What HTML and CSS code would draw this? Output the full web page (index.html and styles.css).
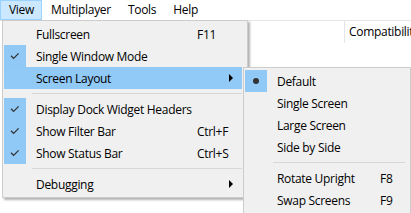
FILE: index.html
```html
<!DOCTYPE html>
<html>
<head>
<meta charset="utf-8">
<link rel="stylesheet" href="styles.css">
</head>
<body>
<div class="menubar">
  <div class="mb-item active">View</div>
  <div class="mb-item">Multiplayer</div>
  <div class="mb-item">Tools</div>
  <div class="mb-item">Help</div>
</div>
<div class="table-header">
  <div class="th-spacer"></div>
  <div class="th-cell">Compatibility</div>
</div>

<div class="menu main-menu">
  <div class="item"><span class="chk"></span><span class="label">Fullscreen</span><span class="sc">F11</span><span></span></div>
  <div class="item checked"><span class="chk"><svg width="22" height="22" viewBox="0 0 22 22"><path d="M7 10.8 L9.6 13.4 L14.6 8.4" fill="none" stroke="#333" stroke-width="1.3"/></svg></span><span class="label">Single Window Mode</span><span class="sc"></span><span></span></div>
  <div class="item hl"><span class="chk"></span><span class="label">Screen Layout</span><span class="sc"></span><span class="arr"></span></div>
  <div class="sep"></div>
  <div class="item checked"><span class="chk"><svg width="22" height="22" viewBox="0 0 22 22"><path d="M7 10.8 L9.6 13.4 L14.6 8.4" fill="none" stroke="#333" stroke-width="1.3"/></svg></span><span class="label">Display Dock Widget Headers</span><span class="sc"></span><span></span></div>
  <div class="item checked"><span class="chk"><svg width="22" height="22" viewBox="0 0 22 22"><path d="M7 10.8 L9.6 13.4 L14.6 8.4" fill="none" stroke="#333" stroke-width="1.3"/></svg></span><span class="label">Show Filter Bar</span><span class="sc">Ctrl+F</span><span></span></div>
  <div class="item checked"><span class="chk"><svg width="22" height="22" viewBox="0 0 22 22"><path d="M7 10.8 L9.6 13.4 L14.6 8.4" fill="none" stroke="#333" stroke-width="1.3"/></svg></span><span class="label">Show Status Bar</span><span class="sc">Ctrl+S</span><span></span></div>
  <div class="sep"></div>
  <div class="item"><span class="chk"></span><span class="label">Debugging</span><span class="sc"></span><span class="arr"></span></div>
</div>

<div class="menu sub-menu">
  <div class="item sub checked"><span class="chk"><svg width="22" height="22" viewBox="0 0 22 22"><circle cx="11" cy="11" r="3" fill="#333"/></svg></span><span class="label">Default</span><span class="sc"></span></div>
  <div class="item sub"><span class="chk"></span><span class="label">Single Screen</span><span class="sc"></span></div>
  <div class="item sub"><span class="chk"></span><span class="label">Large Screen</span><span class="sc"></span></div>
  <div class="item sub"><span class="chk"></span><span class="label">Side by Side</span><span class="sc"></span></div>
  <div class="sep"></div>
  <div class="item sub"><span class="chk"></span><span class="label">Rotate Upright</span><span class="sc">F8</span></div>
  <div class="item sub"><span class="chk"></span><span class="label">Swap Screens</span><span class="sc">F9</span></div>
</div>
</body>
</html>
```

FILE: styles.css
```css
html, body {
  margin: 0;
  padding: 0;
}
body {
  width: 411px;
  height: 213px;
  overflow: hidden;
  position: relative;
  background: #ffffff;
  font-family: "Open Sans", "Noto Sans", sans-serif;
  font-size: 12px;
  letter-spacing: -0.3px;
  color: #000;
}
.menubar {
  display: flex;
  height: 20px;
}
.mb-item {
  padding: 0 7px 0 8px;
  line-height: 18px;
  border: 1px solid transparent;
  white-space: nowrap;
}
.mb-item.active {
  background: #cce8ff;
  border-color: #99d1ff;
}
.table-header {
  display: flex;
  height: 22px;
  border-top: 1px solid #e5e5e5;
  overflow: hidden;
}
.th-spacer {
  width: 344px;
  flex: none;
}
.th-cell {
  border-left: 1px solid #e5e5e5;
  padding-left: 4px;
  line-height: 22px;
  white-space: nowrap;
}
.menu {
  position: absolute;
  background: #f0f0f0;
  border: 1px solid #cccccc;
  padding: 2px 5px 2px 1px;
  box-shadow: 2px 2px 2px rgba(0, 0, 0, 0.3);
}
.main-menu {
  left: 2px;
  top: 20px;
}
.sub-menu {
  left: 243px;
  top: 67px;
}
.item {
  display: grid;
  grid-template-columns: 22px 171px 30px 15px;
  height: 22px;
  align-items: center;
}
.item.sub {
  grid-template-columns: 22px 113px 25px;
}
.item.hl {
  background: #91c9f7;
}
.chk {
  width: 22px;
  height: 22px;
  display: flex;
  align-items: center;
  justify-content: center;
}
.item.checked .chk {
  background: #90c8f6;
}
.label {
  padding-left: 10px;
  white-space: nowrap;
}
.sc {
  white-space: nowrap;
}
.arr {
  width: 0;
  height: 0;
  margin-left: 2px;
  border-left: 4px solid #000;
  border-top: 4px solid transparent;
  border-bottom: 4px solid transparent;
}
.sep {
  height: 9px;
  display: flex;
  align-items: center;
}
.sep::after {
  content: "";
  flex: 1;
  margin-left: 28px;
  height: 1px;
  background: #d7d7d7;
}
```
